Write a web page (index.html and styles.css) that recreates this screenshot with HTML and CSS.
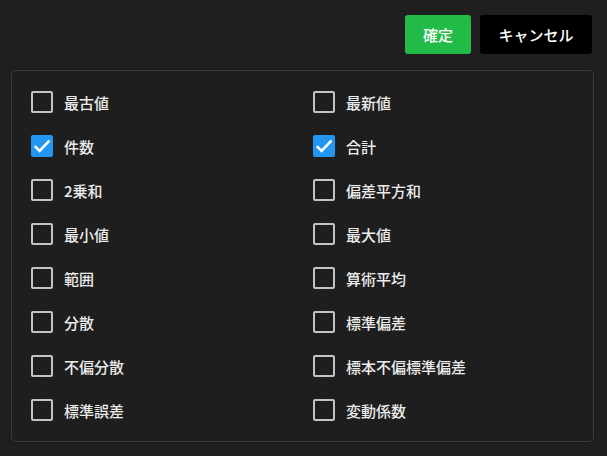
FILE: index.html
```html
<!DOCTYPE html>
<html lang="ja">
<head>
<meta charset="utf-8">
<link rel="stylesheet" href="styles.css">
</head>
<body>
<div class="toolbar">
  <button class="btn btn-ok">確定</button>
  <button class="btn btn-cancel">キャンセル</button>
</div>
<div class="panel">
  <label class="item"><span class="box"></span>最古値</label>
  <label class="item"><span class="box"></span>最新値</label>
  <label class="item"><span class="box checked"><svg viewBox="0 0 22 22"><path d="M3.8 11.2l4.8 4.8 9.8-10.3" fill="none" stroke="#fff" stroke-width="2.6"/></svg></span>件数</label>
  <label class="item"><span class="box checked"><svg viewBox="0 0 22 22"><path d="M3.8 11.2l4.8 4.8 9.8-10.3" fill="none" stroke="#fff" stroke-width="2.6"/></svg></span>合計</label>
  <label class="item"><span class="box"></span>2乗和</label>
  <label class="item"><span class="box"></span>偏差平方和</label>
  <label class="item"><span class="box"></span>最小値</label>
  <label class="item"><span class="box"></span>最大値</label>
  <label class="item"><span class="box"></span>範囲</label>
  <label class="item"><span class="box"></span>算術平均</label>
  <label class="item"><span class="box"></span>分散</label>
  <label class="item"><span class="box"></span>標準偏差</label>
  <label class="item"><span class="box"></span>不偏分散</label>
  <label class="item"><span class="box"></span>標本不偏標準偏差</label>
  <label class="item"><span class="box"></span>標準誤差</label>
  <label class="item"><span class="box"></span>変動係数</label>
</div>
</body>
</html>
```
FILE: styles.css
```css
html, body {
  margin: 0;
  padding: 0;
  background: #1f1f1f;
  font-family: "Noto Sans CJK JP", "Noto Sans", sans-serif;
  color: #eeeeee;
}
body {
  width: 607px;
  height: 456px;
  overflow: hidden;
}
.toolbar {
  display: flex;
  justify-content: flex-end;
  gap: 9px;
  padding: 15px 15px 0 0;
  height: 39px;
}
.btn {
  height: 39px;
  border: none;
  border-radius: 3px;
  color: #ffffff;
  font-family: inherit;
  font-size: 15px;
  font-weight: 500;
  padding: 0;
}
.btn-ok {
  width: 66px;
  background: #22bb48;
}
.btn-cancel {
  width: 112px;
  background: #000000;
}
.panel {
  margin: 17px 14px 0 12px;
  height: 370px;
  box-sizing: border-box;
  border-radius: 4px;
  background: #1e1e1e;
  box-shadow: 0 0 0 1px #3c3c3c, 0 1px 3px rgba(0,0,0,0.6);
  padding: 9px 0 0 19px;
  display: grid;
  grid-template-columns: 282px 1fr;
  grid-auto-rows: 44px;
}
.item {
  display: flex;
  align-items: center;
  font-size: 15px;
  font-weight: 500;
  color: #ececec;
}
.box {
  width: 22px;
  height: 22px;
  box-sizing: border-box;
  border: 2px solid #c4c4c4;
  border-radius: 2px;
  margin-right: 11px;
  flex: none;
  display: flex;
}
.box.checked {
  background: #2196f3;
  border-color: #2196f3;
}
.box svg {
  width: 22px;
  height: 22px;
  margin: -2px;
}
```
